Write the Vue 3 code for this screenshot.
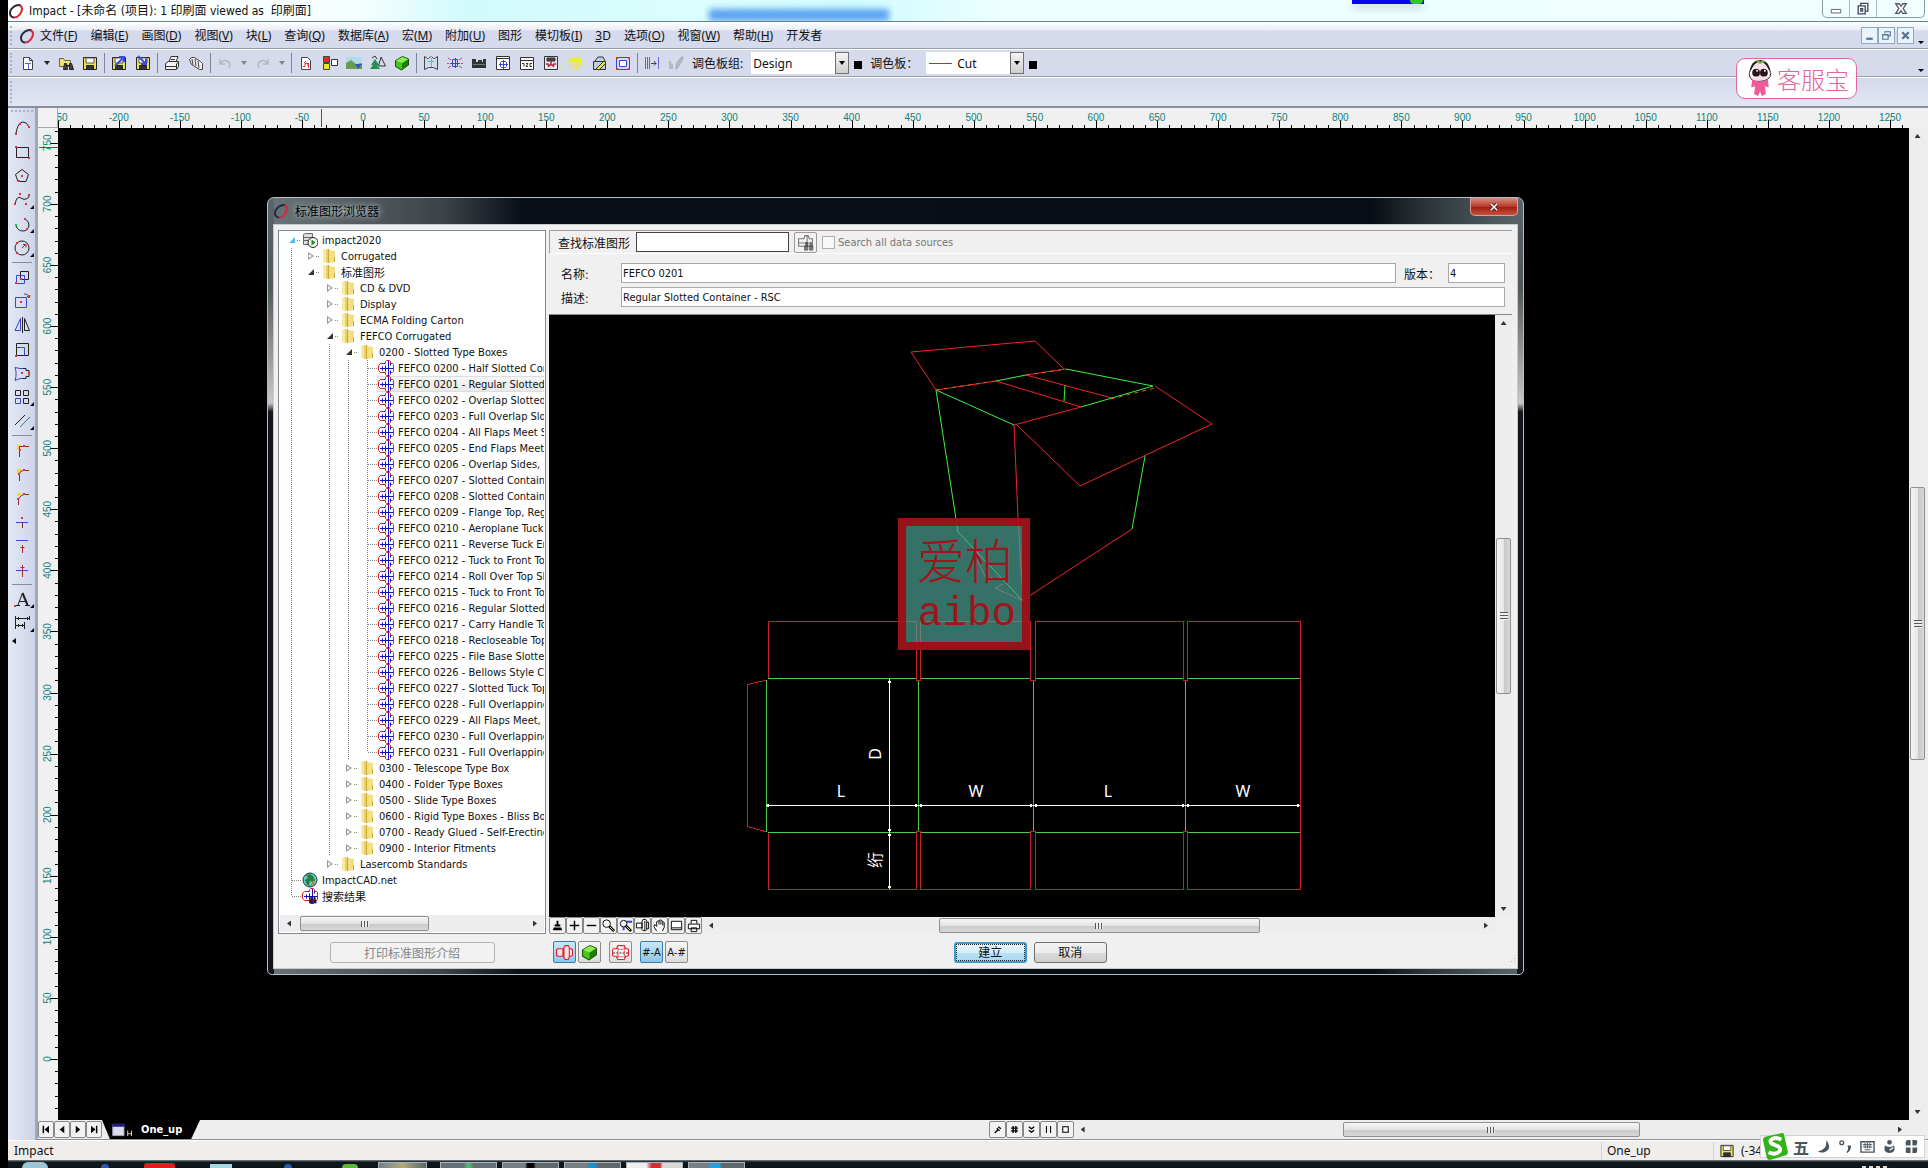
<template>
  <div class="app">
    <header class="titlebar">
      <svg class="ring" viewBox="0 0 16 16" v-html="icons.ring"></svg>
      <h1 class="title">Impact - [未命名 (项目): 1 印刷面 viewed as&nbsp; 印刷面]</h1>
      <div class="tabglow"></div>
      <div class="dropzone"><i></i></div>
      <div class="winctl">
        <button type="button" aria-label="最小化"><svg viewBox="0 0 16 16" v-html="icons.winMin"></svg></button>
        <button type="button" aria-label="还原"><svg viewBox="0 0 16 16" v-html="icons.winRestore"></svg></button>
        <button type="button" class="wide" aria-label="关闭"><svg viewBox="0 0 16 16" v-html="icons.winClose"></svg></button>
      </div>
    </header>

    <nav class="menubar">
      <span class="grip"></span>
      <svg class="ring" viewBox="0 0 16 16" v-html="icons.ring"></svg>
      <button v-for="m in menus" :key="m[0] + m[1]" type="button" class="menu">{{ m[0] }}<template v-if="m[1]">(<u>{{ m[1] }}</u>)</template></button>
      <button type="button" class="menu"><u>3</u>D</button>
      <button v-for="m in menusEnd" :key="m[0]" type="button" class="menu">{{ m[0] }}<template v-if="m[1]">(<u>{{ m[1] }}</u>)</template></button>
      <div class="mdictl">
        <button type="button" aria-label="最小化文档"><svg viewBox="0 0 12 12"><path d="M3 9h6" stroke="#54708f" stroke-width="2" /></svg></button>
        <button type="button" aria-label="还原文档"><svg viewBox="0 0 12 12"><path d="M4.500 4V2.500h5v4H8M2.500 5.500h5v4h-5zM2 5h6" fill="none" stroke="#54708f" /></svg></button>
        <button type="button" class="apart" aria-label="关闭文档"><svg viewBox="0 0 12 12"><path d="M3 3l6 6M9 3l-6 6" stroke="#54708f" stroke-width="2" /></svg></button>
      </div>
      <i class="more"></i>
    </nav>

    <div class="toolbar">
      <span class="grip"></span>
      <template v-for="(t, i) in tools" :key="i">
        <span v-if="t === '|'" class="sep"></span>
        <button v-else-if="t === 'v'" type="button" class="caret" aria-label="更多"></button>
        <button v-else-if="t === 'g'" type="button" class="caret off" aria-label="更多" disabled></button>
        <button v-else type="button" class="tool" :aria-label="t"><svg viewBox="0 0 16 16" v-html="icons[t]"></svg></button>
      </template>
      <label for="palette-group" class="barlabel">调色板组:</label>
      <div class="combo">
        <select id="palette-group" v-model="group"><option>Design</option></select>
        <span class="drop"></span>
      </div>
      <i class="block"></i>
      <label for="palette" class="barlabel">调色板：</label>
      <div class="combo">
        <i class="redline"></i>
        <select id="palette" v-model="palette"><option>Cut</option></select>
        <span class="drop"></span>
      </div>
      <i class="block"></i>
      <i class="more"></i>
    </div>
    <div class="toolbar empty"><span class="grip"></span></div>

    <div class="work">
      <aside class="side">
        <span class="hgrip"></span>
        <template v-for="(t, i) in sideTools" :key="i">
          <span v-if="t === '|'" class="hsep"></span>
          <button v-else type="button" class="sidetool" :class="{ fly: flyouts.includes(t) }" :aria-label="t">
            <svg viewBox="0 0 18 18" v-html="icons[t]"></svg>
          </button>
        </template>
        <i class="sidearrow"></i>
      </aside>

      <main class="doc">
        <div class="view">
          <div class="corner"></div>
          <svg class="hruler">
            <path :d="hTicks" stroke="#000" />
            <text v-for="v in hLabels" :key="v" :x="305 + v * scale" y="13" text-anchor="middle">{{ v }}</text>
            <path d="M263.500 1v18" stroke="#c8202c" />
          </svg>
          <div class="rcap"></div>
          <svg class="vruler">
            <path :d="vTicks" stroke="#000" />
            <text v-for="v in vLabels" :key="v" :transform="`translate(13 ${931 - v * scale}) rotate(-90)`" text-anchor="middle">{{ v }}</text>
            <path d="M1 19.500h19" stroke="#c8202c" />
          </svg>
          <div class="canvas"></div>
          <div class="scroll vert main-v">
            <i class="arr up"></i>
            <div class="track"><div class="thumb"></div></div>
            <i class="arr down"></i>
          </div>
        </div>
        <footer class="tabs">
          <button v-for="n in navs" :key="n" type="button" class="nav" :aria-label="n"><svg viewBox="0 0 16 16" v-html="icons[n]"></svg></button>
          <button type="button" class="sheet">
            <svg viewBox="0 0 24 16" v-html="icons.sheet"></svg>One_up
          </button>
          <div class="filler"></div>
          <button v-for="n in viewBtns" :key="n" type="button" class="nav vb" :aria-label="n"><svg viewBox="0 0 16 16" v-html="icons[n]"></svg></button>
          <div class="scroll main-h">
            <i class="arr back"></i>
            <div class="track"><div class="thumb"></div></div>
            <i class="arr fwd"></i>
          </div>
        </footer>
      </main>
    </div>

    <div class="status">
      <span class="msg">Impact</span>
      <span class="cell">One_up</span>
      <span class="cell pos"><svg viewBox="0 0 16 16" v-html="icons.save"></svg>(-34</span>
    </div>

    <div class="taskbar">
      <i class="orb"></i><i class="q blue"></i><i class="q red"></i><i class="q pane"></i><i class="q blue"></i><i class="q green"></i>
      <i v-for="c in tasks" :key="c" class="task" :class="c"></i>
      <i class="clock"></i>
    </div>

    <!-- floating service badge -->
    <button type="button" class="service">
      <svg viewBox="0 0 28 40" v-html="icons.mascot"></svg>客服宝
    </button>

    <div class="ime">
      <svg class="slogo" viewBox="0 0 28 28"><path d="M4 4l18-4q2 0 2 2l4 18q0 2-2 3l-17 5q-2 0-3-2L2 7q0-2 2-3z" fill="#35b11d" /><path d="M21 7q-5-3-9-1t-1 5l7 3q4 3 0 6t-10 0" fill="none" stroke="#fff" stroke-width="4" /></svg>
      <span>五</span>
      <svg v-for="n in imeIcons" :key="n" viewBox="0 0 16 16" v-html="icons[n]"></svg>
    </div>

    <section class="dialog" role="dialog" aria-labelledby="dlg-title">
      <div class="caption">
        <svg class="ring" viewBox="0 0 16 16" v-html="icons.ring"></svg>
        <h2 id="dlg-title">标准图形浏览器</h2>
        <button type="button" class="close" aria-label="关闭"><svg viewBox="0 0 16 10"><path d="M4 1l8 8M12 1L4 9" stroke="#4a1a14" stroke-width="4" /><path d="M4 1l8 8M12 1L4 9" stroke="#fff" stroke-width="2" /></svg></button>
      </div>
      <div class="body">
        <div class="browser">
          <div class="tree">
            <ul>
              <li v-for="row in rows" :key="row.text" :class="{ sel: row.text === selected }">
                <span v-for="(c, i) in row.cells" :key="i" class="ind" :class="c"></span>
                <button type="button" class="node" @click="selected = row.text">
                  <svg viewBox="0 0 16 16" v-html="icons[row.icon]"></svg>{{ row.text }}
                </button>
              </li>
            </ul>
            <div class="scroll tree-h">
              <i class="arr back"></i>
              <div class="track"><div class="thumb"></div></div>
              <i class="arr fwd"></i>
            </div>
          </div>
          <button type="button" class="btn print" disabled>打印标准图形介绍</button>
        </div>

        <div class="detail">
          <div class="search">
            <label for="find">查找标准图形</label>
            <input id="find" v-model="query" type="text" />
            <button type="button" class="findbtn" aria-label="查找"><svg viewBox="0 0 16 16" v-html="icons.findGray"></svg></button>
            <input id="all" type="checkbox" disabled />
            <label for="all" class="dim">Search all data sources</label>
          </div>
          <div class="fields">
            <div class="field">
              <label for="name">名称:</label>
              <input id="name" v-model="name" type="text" />
              <label for="ver" class="ver">版本：</label>
              <input id="ver" v-model="version" type="text" class="short" />
            </div>
            <div class="field">
              <label for="desc">描述:</label>
              <input id="desc" v-model="desc" type="text" />
            </div>
          </div>

          <div class="preview">
            <svg class="drawing" viewBox="549 315 946 602">
              <g fill="none" stroke="#f0242e">
                <path d="M936 390L911 352L1035 341L1064 369M936 390L996 381M1026 375L1066 369M1014 425L1081 407M996 381L1081 407M1026 375L1112 398M1155 386L1212 424L1080 486L1017 425M1014 425L1018 518L1023 600L1132 529" />
                <path d="M975 556L987 580L992 577M1003 584L995 588L1023 601" />
              </g>
              <g fill="none" stroke="#3cf03c">
                <path d="M996 381L1026 375M1066 369L1153 386L1081 407M936 390L1014 425M1065 385L1064 401M936 390L958 532L1023 601M1145 456L1132 529" />
              </g>
              <path d="M936 390L996 381M1026 375L1066 369M1111 399L1155 388" fill="none" stroke="#d0641c" stroke-dasharray="4 4" />
              <g fill="none" stroke="#c8202a" shape-rendering="crispEdges">
                <path d="M768.500 679V621.500H916.500V680.500H920.500V621.500H1030.500V680.500H1035.500V621.500H1183.500V680.500H1187.500V621.500H1300.500V889.500H1187.500V831.500H1183.500V889.500H1035.500V831.500H1030.500V889.500H920.500V831.500H916.500V889.500H768.500V832" />
                <path d="M767 680L747.500 684.500V826.500L767 832" />
              </g>
              <path d="M768 678.500H916M921 678.500H1030M1036 678.500H1183M1188 678.500H1300M768 832.500H916M921 832.500H1030M1036 832.500H1183M1188 832.500H1300M766.500 680V832M918.500 681V831M1033.500 681V831M1185.500 681V831" stroke="#4cc84c" shape-rendering="crispEdges" />
              <g stroke="#fff" fill="#fff" shape-rendering="crispEdges">
                <path d="M766 805.500H1300M889.500 679V889" />
                <path v-for="x in [768, 916, 921, 1031, 1036, 1183, 1188, 1298]" :key="x" :d="`M${x - 1} 804h2v3h-2z`" stroke="none" />
                <path v-for="y in [682, 830, 835, 887]" :key="y" :d="`M888 ${y - 1}h3v2h-3z`" stroke="none" />
              </g>
              <g class="dims" text-anchor="middle">
                <text x="841" y="797">L</text>
                <text x="976" y="797">W</text>
                <text x="1108" y="797">L</text>
                <text x="1243" y="797">W</text>
                <text transform="translate(881 754) rotate(-90)">D</text>
                <text transform="translate(881 860) rotate(-90)">绗</text>
              </g>
              <path d="M906 526h116v116H906z" fill="#4ea698" fill-opacity=".68" />
              <path d="M902 522h124v124H902z" fill="none" stroke="#a0141a" stroke-opacity=".95" stroke-width="8" />
              <g class="seal" text-anchor="middle">
                <text x="965" y="579" class="han">爱柏</text>
                <text x="967" y="625" class="lat">aibo</text>
              </g>
            </svg>
            <div class="scroll vert dlg-v">
              <i class="arr up"></i>
              <div class="track"><div class="thumb"></div></div>
              <i class="arr down"></i>
            </div>
          </div>
          <div class="zoombar">
            <button v-for="n in zooms" :key="n" type="button" class="nav zb" :aria-label="n"><svg viewBox="0 0 16 16" v-html="icons[n]"></svg></button>
            <div class="scroll dlg-h">
              <i class="arr back"></i>
              <div class="track"><div class="thumb"></div></div>
              <i class="arr fwd"></i>
            </div>
            <div class="nook"></div>
          </div>
          <div class="actions">
            <button type="button" class="mode on" aria-label="平面"><svg viewBox="0 0 16 16" v-html="icons.flat"></svg></button>
            <button type="button" class="mode" aria-label="立体"><svg viewBox="0 0 16 16" v-html="icons.cube"></svg></button>
            <button type="button" class="mode apart" aria-label="尺寸"><svg viewBox="0 0 16 16" v-html="icons.flatDim"></svg></button>
            <button type="button" class="mode apart on">#-A</button>
            <button type="button" class="mode">A-#</button>
            <div class="okrow">
              <button type="button" class="btn primary">建立</button>
              <button type="button" class="btn">取消</button>
            </div>
            <i class="resize"></i>
          </div>
        </div>
      </div>
    </section>
  </div>
</template>

<script setup>
import { ref } from 'vue'

const group = ref('Design')
const palette = ref('Cut')
const query = ref('')
const name = ref('FEFCO 0201')
const version = ref('4')
const desc = ref('Regular Slotted Container - RSC')
const selected = ref('FEFCO 0201 - Regular Slotted Container')

const menus = [['文件', 'F'], ['编辑', 'E'], ['画图', 'D'], ['视图', 'V'], ['块', 'L'], ['查询', 'Q'], ['数据库', 'A'], ['宏', 'M'], ['附加', 'U'], ['图形', ''], ['模切板', 'I']]
const menusEnd = [['选项', 'O'], ['视窗', 'W'], ['帮助', 'H'], ['开发者', '']]
const tools = ['page', 'v', 'open', 'save', '|', 'saveUp', 'saveDown', '|', 'print', 'printAll', '|', 'undo', 'g', 'redo', 'g', '|', 'sheetRed', 'swatch', 'image', 'tree', 'cube', '|', 'bracket', 'chip', 'block', 'panel', 'wave', 'die', 'yellow', 'edit', 'frame', '|', 'align', 'brush']
const sideTools = ['sArc', 'sRect', 'sPoly', 'sSpline', 'sCurve', 'sCircle', '|', 'sCopy', 'sRotate', 'sMirror', 'sScale', 'sStretch', 'sArray', 'sOffset', '|', 'sCorner', 'sFillet', 'sChamfer', 'sTrimA', 'sTrimB', 'sTrimC', '|', 'sText', 'sDim']
const flyouts = ['sSpline', 'sCurve', 'sCircle', 'sArray', 'sOffset', 'sText', 'sDim']
const navs = ['first', 'prev', 'next', 'last']
const viewBtns = ['pin', 'hash', 'down2', 'bars', 'box']
const zooms = ['brushBlk', 'plus', 'minus', 'lens', 'lensBox', 'shapeBlk', 'hand', 'window', 'printer2']
const imeIcons = ['moon', 'comma', 'keyb', 'person', 'clover']
const tasks = ['t1', 't2', 't3', 't4', 't5', 't6']

// rulers: 61px for every 50 units
const scale = 1.2216
const range = (a, b, step) => Array.from({ length: Math.floor((b - a) / step) + 1 }, (_, i) => a + i * step)
const hLabels = range(-250, 1250, 50)
const vLabels = range(0, 750, 50)
const hTicks = range(-250, 2500, 10).map(v => `M${Math.round(305 + v * scale) + 0.5} ${v % 50 ? 17 : 12}V20`).join('')
const vTicks = range(-500, 760, 10).map(v => `M${v % 50 ? 17 : 12} ${Math.round(931 - v * scale) + 0.5}H20`).join('')

const leaves = ['0200 - Half Slotted Container', '0201 - Regular Slotted Container', '0202 - Overlap Slotted Container', '0203 - Full Overlap Slotted Container', '0204 - All Flaps Meet Slotted', '0205 - End Flaps Meet Slotted', '0206 - Overlap Sides, Ends Meet', '0207 - Slotted Container', '0208 - Slotted Container Insert', '0209 - Flange Top, Regular Base', '0210 - Aeroplane Tuck, Regular', '0211 - Reverse Tuck Ends', '0212 - Tuck to Front Top', '0214 - Roll Over Top Slotted', '0215 - Tuck to Front Top Base', '0216 - Regular Slotted Tuck', '0217 - Carry Handle Top', '0218 - Recloseable Top', '0225 - File Base Slotted', '0226 - Bellows Style Container', '0227 - Slotted Tuck Top', '0228 - Full Overlapping Top', '0229 - All Flaps Meet, Overlap', '0230 - Full Overlapping Base', '0231 - Full Overlapping Ends']
const node = (cells, icon, text) => ({ cells, icon, text })
const rows = [
  node(['open root'], 'server', 'impact2020'),
  node(['guide', 'shut'], 'folder', 'Corrugated'),
  node(['guide', 'open'], 'folder', '标准图形'),
  node(['guide', '', 'shut'], 'folder', 'CD & DVD'),
  node(['guide', '', 'shut'], 'folder', 'Display'),
  node(['guide', '', 'shut'], 'folder', 'ECMA Folding Carton'),
  node(['guide', '', 'open'], 'folder', 'FEFCO Corrugated'),
  node(['guide', '', 'guide', 'open'], 'folder', '0200 - Slotted Type Boxes'),
  ...leaves.map((l, i) => node(['guide', '', 'guide', 'guide', i === leaves.length - 1 ? 'elbow' : 'tee'], 'carton', 'FEFCO ' + l)),
  ...['0300 - Telescope Type Box', '0400 - Folder Type Boxes', '0500 - Slide Type Boxes', '0600 - Rigid Type Boxes - Bliss Boxes', '0700 - Ready Glued - Self-Erecting', '0900 - Interior Fitments'].map(t => node(['guide', '', 'guide', 'shut'], 'folder', t)),
  node(['guide', '', 'shut'], 'folder', 'Lasercomb Standards'),
  node(['tee'], 'globe', 'ImpactCAD.net'),
  node(['elbow'], 'cartonFind', '搜索结果')
]

const p = (d, stroke = '#222', fill = 'none', w = 1) => `<path d="${d}" stroke="${stroke}" fill="${fill}" stroke-width="${w}"/>`
const dot = (...pts) => pts.map(([x, y]) => `<path d="M${x - 1} ${y - 1}h2v2h-2z" fill="#e8303c"/>`).join('')
const floppy = p('M1.500 2.500h13v12h-13z', '#222', '#e8e45a') + p('M4 3h8v5H4z', '#555', '#fff') + p('M4.500 10.500h7v4h-7z', '#222', '#333')
const carton = p('M2.500 3.500h5v-2l1-1h3l1 1v2h2l1 1v7l-1 1h-2v2l-1 1h-3l-1-1v-2h-5l-2-2v-5z', '#e01828', '#fff') + p('M2 8.500h13M10.500 1v15M4.500 6.500v4M6 3.500h1M12.500 3.500v2M12.500 10.500v3M7.500 5.500v6', '#1010c0')
const glass = p('M4 5h2v4H4zM9 5h2v4H9zM2.500 9h4v5h-4zM8.500 9h4v5h-4zM6 8h3', '#222', '#222')

const icons = {
  ring: p('M12.500 2.200C8 1 2.500 5 2 9.500c-.2 3 1.500 5 4 5', '#222b3c', 'none', 2) + p('M6 14.500c4.500 0 8-5 8-8.500 0-2-1-3.300-2.500-3.800', '#d8283c', 'none', 2),
  winMin: p('M2.500 8.500h11v4h-11z', '#556', '#fff'),
  winRestore: p('M5.500 4V1.500h8v9H11M2.500 4.500h8v9h-8zM5.500 7.500h2v3h-2z', '#445', 'none', 1.5),
  winClose: p('M2 2h4l2 3 2-3h4L10.500 7.500l3.500 5.500h-4l-2-3-2 3H2l3.500-5.500z', '#556', '#fff', 1.5),
  page: p('M3.500 2.500h6l3 3v9h-9z', '#444', '#fff') + p('M9.500 2.500v3h3', '#444') + p('M5 8.500h6M8.500 8v6', '#4a68d0'),
  open: p('M1.500 3.500h4l1 2h6v6h-11z', '#665', '#efe36a') + p('M6.500 8.500h2l1 6h-4zM11.500 8.500h2l2 6h-4zM8 10.500h4', '#222', '#444'),
  save: floppy,
  saveUp: floppy + p('M4 11L12 3M8 2h5v5', '#3a4ce0', 'none', 2),
  saveDown: floppy + p('M3 1l8 8M11 4v5H6', '#3a4ce0', 'none', 2),
  print: p('M5 7l2-5.500h7l-2 5.500M1.500 8.500l3-2h10v5l-2 3h-11z', '#333', '#f4f4f4') + p('M2 11.500h10M7 4.500h4M12.500 14V9l2-2', '#333'),
  printAll: p('M1.500 4.500l2-2h3l6 4 2 2v6h-3l-8-5zM4 4l1 6M7 4l1 7M10 6l1 7', '#444', '#eee'),
  undo: p('M3 4v5h5M3 9q3-5 7-3t2 7', '#b4b9c6', 'none', 1.5),
  redo: p('M13 4v5H8M13 9q-3-5-7-3t-2 7', '#b4b9c6', 'none', 1.5),
  sheetRed: p('M3.500 2.500h6l3 3v9h-9z', '#444', '#fff') + p('M5 11.500h2V8.500h3v3M6 8l2-2M10.500 8v5', '#d8303c'),
  swatch: p('M1.500 1.500h6v6h-6z', '#444', '#e02c24') + p('M1.500 8.500h6v6h-6z', '#444', '#f0e420') + p('M9.500 4.500h6v6h-6z', '#333', '#fff'),
  image: `<path d="M0 2h16v6H0z" fill="#aedcea"/><path d="M0 8l5-3 5 4 6-1v6H0z" fill="#6c9a52"/><path d="M9 9h7l-4 5z" fill="#2c5cb8"/>`,
  tree: `<path d="M5 4l4 6H7l3 4H0l3-4H1z" fill="#22914c"/>` + p('M2 3l3-2 2 3M11 2l4.500 9h-7z', '#333'),
  cube: p('M1.500 5.500l7-4 6 2.500v6l-7 5-6-3.500z', '#174a08', '#45c81c') + `<path d="M2 5.500l6.500-3.600L14 4.200 7.700 8z" fill="#8cf04c"/><path d="M8 8.500l6-4v5.300l-6 4.500z" fill="#1f7a0a"/>`,
  bracket: p('M1.500 14.500v-13l3 2h1l2-2M14.500 14.500v-13l-3 2h-1l-2-2M1.500 14.500l4-2h5l4 2', '#444') + p('M8.500 3v9M5 6.500h6', '#3cc4e4', 'none', 1),
  chip: p('M5.500 4.500h5v7h-5zM3 8.500h10M8.500 3v10', '#3a44d8') + p('M1 3l3 2M15 3l-3 2M1 13l3-2M15 13l-3-2M0 8.500h2M14 8.500h2', '#d83a78'),
  block: `<path d="M1 4h4v3h2V5h4v2h1V4h3v9H1z" fill="#333"/><path d="M2 9h12v1H2z" fill="#777"/>`,
  panel: p('M1.500 1.500h13v13h-13z', '#333', '#fff') + p('M2 3.500h12', '#333') + p('M4 9.500h9M8.500 5v9M6.500 6.500h4l1 1v4l-1 1h-4l-1-1v-4z', '#3a44d8'),
  wave: p('M1.500 2.500h13v12h-13z', '#333', '#fff') + p('M2 5.500h12M3 8.500h2v3M7 8.500h2l-2 3h2M13 8.500h-2v3h2', '#333'),
  die: p('M1.500 1.500h13v13h-13z', '#333', '#e8e4e8') + p('M4 3h8v3H4z', '#333', '#444') + p('M3 9h2l1 3M13 9h-2l-1 3M8 6v4M6 10h4', '#b02840', 'none', 1.5),
  yellow: p('M4 3.500h8M4 12.500h8M2.500 5.500h11v5h-11z', '#f0ec28', 'none', 1.5) + p('M6 8h4', '#f0ec28'),
  edit: p('M2.500 6.500h12v8h-12zM4 6l3-4h5l2 4', '#333', '#bcd0e0') + p('M5 14l8-8 2 2-7 7z', '#333', '#f0e428'),
  frame: p('M1.500 2.500h13v12h-13z', '#3a44d8') + p('M4.500 5.500h7v6h-7z', '#3a44d8', '#fff') + dot([2, 3], [14, 3], [2, 14], [14, 14]),
  align: p('M1.500 2v12M3.500 2v12M5.500 2v12', '#e03c4c') + p('M7 8.500h5M10 6l2 2.500-2 2', '#444') + p('M14.500 2v12', '#6a6ad8'),
  brush: p('M2 6v8M4 9v5M8 14l1-6 5-6 1 1-4 7z', '#aaaeb8', '#c4c8d0', 1.5),
  sArc: p('M3 14Q5 3 10 3q4 0 6 5') + dot([3, 15], [7, 5], [16, 8]),
  sRect: p('M3.500 4.500h12v10h-12z') + dot([3, 4], [16, 15]),
  sPoly: p('M9 2.500l6.500 5-2.500 7H5L2.500 7.500z') + dot([9, 9], [6, 14]),
  sSpline: p('M2 13Q4 4 8 7t8-1v-3', '#222') + dot([2, 13], [7, 3], [13, 13], [16, 4]),
  sCurve: p('M3 11q2 5 7 5t6-6q0-4-4-6') + dot([12, 4], [14, 14]) + `<path d="M2 9h2v2H2z" fill="#2cc43c"/>`,
  sCircle: `<circle cx="9" cy="9" r="7" fill="none" stroke="#222"/>` + p('M9 9l4-4M10 5.500h3v3', '#a02030') + dot([4, 14], [4, 4]),
  sCopy: p('M7.500 3.500h8v8h-8z') + p('M3.500 7.500h8v8h-8z', '#3a44d8') + dot([3, 15], [8, 11]),
  sRotate: p('M2.500 5.500h11v10h-11z', '#3a44d8') + p('M11 2q5 0 5 4M14 4l2 2 1-3', '#a02030') + dot([8, 10]),
  sMirror: p('M7.500 2.500v12H2z', '#3a44d8') + p('M9.500 1v16', '#222') + p('M11.500 2.500v12h5z'),
  sScale: p('M3.500 3.500h12v12h-12z') + p('M3.500 7.500h8v8', '#3a44d8') + dot([3, 16]),
  sStretch: p('M10 4.500H7l-5-1 1 4v5l-1 4 5-2h3', '#3a44d8') + p('M10 4.500h3v2h3v6h-3v2h-3') + dot([9, 9], [16, 9]),
  sArray: p('M2.500 2.500h5v5h-5zM10.500 2.500h5v5h-5zM10.500 10.500h5v5h-5z') + p('M2.500 10.500h5v5h-5z', '#3a44d8'),
  sOffset: p('M2 13L12 3') + p('M7 15L17 5', '#3a7a88'),
  sCorner: p('M4 5h4M5 4v5', '#e8dc28', 'none', 2) + p('M6.500 16V5.500H16', '#803028') + dot([7, 9], [11, 5]),
  sFillet: p('M4 5h4M5 4v5', '#e8dc28', 'none', 2) + p('M6.500 16V9q0-3.500 4-3.500H16', '#803028') + dot([6, 9], [11, 5]),
  sChamfer: p('M4 5h4M5 4v3', '#e8dc28', 'none', 2) + p('M5.500 16V10Q8 5.500 11 5.500h5', '#803028') + dot([5, 10], [11, 5]),
  sTrimA: p('M3 9.500h12', '#3a44d8') + p('M9.500 9v6', '#803028') + dot([9, 5]),
  sTrimB: p('M3 3.500h12', '#3a44d8') + p('M9.500 8v8M7.500 10.500h4', '#b03028'),
  sTrimC: p('M3 9.500h12', '#3a44d8') + p('M9.500 4v12M7.500 6.500h4', '#b03028'),
  sText: p('M5 15L9.500 3l5 12M6 11.500h7M3 15.500h4M12 15.500h5', '#222') + p('M9.500 3l5 12', '#222', 'none', 2) + dot([2, 16]),
  sDim: p('M2.500 2v13M11.500 8v7M16.500 2v4M3 4.500h13M3 11.500h8M5.500 3v3M14.500 3v3M5.500 10v3M9.500 10v3', '#222'),
  first: p('M4.500 3v10', '#000', 'none', 2) + '<path d="M12 3v10L6 8z"/>',
  prev: '<path d="M11 3v10L5 8z"/>',
  next: '<path d="M5 3v10l6-5z"/>',
  last: p('M11.500 3v10', '#000', 'none', 2) + '<path d="M4 3v10l6-5z"/>',
  sheet: p('M.5 2.500h12v12H.5z', '#a8a8c8', '#dcdcec') + '<path d="M0 2h13v3H0z" fill="#1c1c84"/>' + p('M16.500 9v6M20.500 9v6M17 12.500h4', '#e8e4a0'),
  pin: p('M4 13l5-5M7 6l4 4M9 4l4 3', '#000', 'none', 2),
  hash: p('M6 3v10M10 3v10M3 6h10M3 10h10', '#000', 'none', 2),
  down2: p('M4 4l4 3 4-3M4 9l4 3 4-3', '#000', 'none', 2),
  bars: p('M5 3v10M11 3v10', '#000', 'none', 1.5),
  box: p('M4 4h8v8H4z', '#000', '#fff', 1.5),
  brushBlk: '<path d="M7 3h2v4h2v2H5V7h2zM4 10h8l1 3H3z"/>',
  plus: p('M8 3v10M3 8h10', '#000', 'none', 1.5),
  minus: p('M3 8h10', '#000', 'none', 1.5),
  lens: '<circle cx="6" cy="6" r="4" fill="#fff" stroke="#000"/>' + p('M9 9l5 5', '#000', 'none', 3) + p('M9.500 9.500l4 4', '#e8d860'),
  lensBox: p('M8 4h7M6 4v9', '#3a44d8', 'none', 2) + '<circle cx="6" cy="6" r="3.500" fill="#fff" stroke="#000"/>' + p('M8 8l6 6', '#000', 'none', 3) + p('M9 9l4 4', '#e8d860'),
  shapeBlk: p('M1.500 5.500h6v5h-6zM7.500 3.500l1-2h3l1 2v9l-1 1h-3l-1-1zM12.500 4.500h2v7h-2M10.500 3v10', '#000', '#fff'),
  hand: p('M5 14L2 9l1-2 2 2V4l2-1 2-1 2 1 2 2v5l-2 4M7.500 3v4M9.500 3v4M11.500 4v4', '#000', '#fff'),
  window: p('M2.500 3.500h11v9h-11zM3 10.500h10', '#000', '#fff', 1),
  printer2: p('M5.500 6V2.500h6V6M2.500 6.500h12v5h-12zM5.500 10.500h6v4h-6z', '#000', '#fff', 1),
  flat: p('M1.500 4.500h5v7h-5l-1-1v-5zM7.500 3.500l1-2h3l1 2v9l-1 2h-3l-1-2zM12.500 4.500h2l1 1v5l-1 1h-2', '#e02030', '#fbdfe2'),
  flatDim: p('M.5 5.500l1-1h3v-1l1-2h6l1 2v1h2l1 1v5l-1 1h-2v1l-1 2h-6l-1-2v-1h-3l-1-1z', '#e02030', '#fff') + '<path d="M1 8.500h14" stroke="#222" stroke-dasharray="2 1"/>' + '<path d="M5.500 3v10M11.500 3v10M5 5h7M5 12h7" stroke="#e02030" stroke-dasharray="2 1"/>',
  server: p('M1.500 2.500l2-1h7v11h-9zM2 5.500h8M2 8.500h8', '#666', '#ddd') + '<circle cx="11" cy="10.500" r="5" fill="#eef8ea" stroke="#222"/><path d="M9.500 7.500v6l4-3z" fill="#1a8a28"/>',
  folder: '<path d="M2 2l5-1 1 1v13l-6-1z" fill="#e9cf6b"/><path d="M2 2l3-1v13.500L2 14z" fill="#f7ea9d"/><path d="M8 2l6 1v11l-6 1z" fill="#f3df82"/><path d="M7 1h1v14H7z" fill="#c9a93c"/><path d="M13 9h1v5h-1z" fill="#c9a93c"/>',
  carton,
  cartonFind: carton + `<g transform="translate(6 6) scale(.65)">${glass}</g>`,
  globe: '<circle cx="8" cy="8" r="7" fill="#5cd0d4" stroke="#1c3844"/><path d="M4 3l4-1 3 2 2 4-2 2-3-1-1 3 2 2-4-1-2-5 3-2z" fill="#2e7c3a"/><path d="M10 10l3-1-1 4-3 1z" fill="#a88a3a"/>',
  findGray: p('M1.500 4.500h5l1-3h3l1 3h3v7H1.500zM9.500 2v9M2 8.500h10', '#777', '#f4f4f4') + `<g transform="translate(5 4) scale(.8)" opacity=".6">${glass}</g>`,
  mascot: '<path d="M6 7q8-9 16 0l3 8q0 7-11 8T3 15z" fill="#fbdfe8" stroke="#333"/><path d="M4 13q2-11 10-11t10 11" fill="none" stroke="#222" stroke-width="2"/><path d="M10 3l3-2 1 2 3-2 2 2-5 2z" fill="#7cb84a"/><circle cx="9" cy="14" r="5" fill="#fff"/><circle cx="19" cy="14" r="5" fill="#fff"/><circle cx="10" cy="14" r="4" fill="#2a1418"/><circle cx="18" cy="14" r="4" fill="#2a1418"/><circle cx="11" cy="12" r="1" fill="#fff"/><circle cx="19" cy="12" r="1" fill="#fff"/><path d="M6 21q8 4 16 0l1 8-4-1 1 8-4 2-2-5-2 5-4-2 1-8-4 1z" fill="#ee5a9a"/>',
  moon: '<path d="M11 1q7 9-2 13-4 1-7-1 10-1 9-12z" fill="#4a5560"/>',
  comma: '<circle cx="4" cy="4" r="2" fill="none" stroke="#4a5560" stroke-width="1.500"/><path d="M10 7h4q0 5-4 8l-1-1q3-3 1-7z" fill="#4a5560"/>',
  keyb: p('M1 3h14v11H1z', '#4a5560', 'none', 1.5) + p('M3 6h10M3 8.500h10M5 11.500h6', '#4a5560', 'none', 1) + p('M5.500 4v6M8 4v6M10.500 4v6', '#4a5560'),
  person: '<circle cx="8" cy="3.500" r="2.500" fill="#4a5560"/><path d="M3 7q5 3 10 0 2 8-5 8T3 7z" fill="#4a5560"/><path d="M8 12l4-3" stroke="#fff" stroke-width="1.500"/>',
  clover: '<path d="M2 3q0-2 2-2h3v6H3Q1 7 2 3zM9 1h3q3 0 2 3 0 3-2 3H9zM2 9h5v6H4q-3 0-2-3zM9 9h5v4q0 2-2 2H9z" fill="#4a5560"/>'
}
</script>

<style>
html, body, #app { margin: 0; min-height: 100%; }
body { background: #000; overflow: hidden; }
</style>

<style scoped>
.app {
  position: relative;
  display: flex;
  flex-direction: column;
  height: 100vh;
  padding-left: 8px;
  background: #000;
  color: #111;
  font-family: "Noto Sans", "Noto Sans CJK SC", sans-serif;
  font-size: 12px;
}
button, input, select { font: inherit; color: inherit; margin: 0; padding: 0; box-sizing: border-box; }
button { background: none; border: 0; }
h1, h2, ul { margin: 0; padding: 0; font-weight: 400; list-style: none; }
i { display: block; }
svg { display: block; flex: none; }
.ring { width: 16px; height: 16px; }

/* title bar */
.titlebar {
  display: flex;
  align-items: center;
  gap: 5px;
  height: 21px;
  flex: none;
  border-bottom: 1px solid #69828c;
  background: linear-gradient(90deg, #fff, #f6ffff 18%, #d2fafc 24%, #dcfdfd 36%, #d0fbff 44%, #edffff 52%, #f0ffff);
  position: relative;
}
.title { font-family: "DejaVu Sans Condensed", "Noto Sans CJK SC", sans-serif; font-size: 12px; line-height: 20px; white-space: pre; }
.tabglow { position: absolute; left: 36.500%; top: 9px; width: 180px; height: 12px; background: #5ba2f2; filter: blur(3px); clip-path: inset(-6px -6px 0 -6px); }
.dropzone { position: absolute; left: 70%; top: 0; width: 72px; height: 4px; background: #0404ee; box-shadow: 0 4px 8px #b4c4c8; }
.dropzone i { margin-left: 58px; width: 13px; height: 4px; background: #35c82c; border-radius: 0 0 6px 6px; }
.winctl { display: flex; margin-left: auto; margin-right: 3px; align-self: flex-start; border: 1px solid #889ca4; border-top: 0; border-radius: 0 0 5px 5px; }
.winctl button { display: flex; align-items: center; justify-content: center; width: 27px; height: 17px; border-right: 1px solid #a8bcc4; }
.winctl .wide { width: 47px; border: 0; }
.winctl svg { width: 14px; height: 14px; }

/* bars */
.menubar, .toolbar {
  display: flex;
  align-items: center;
  flex: none;
  height: 27px;
  box-sizing: border-box;
  padding: 0 4px 0 2px;
  background: #d5daec;
  border-bottom: 1px solid #98a0ac;
}
.menubar { background: linear-gradient(#fff, #e9ecf6 8px, #d5daec 9px); gap: 13px; padding-top: 1px; }
.menubar .ring { margin: 0 -8px; }
.menu { white-space: nowrap; line-height: 20px; }
.grip { width: 4px; align-self: stretch; margin: 3px 0; border-left: 2px dotted #a9b1c8; box-sizing: border-box; }
.mdictl { display: flex; margin-left: auto; margin-right: -9px; }
.mdictl button { width: 17px; height: 17px; border: 1px solid #90a8c0; background: #eaf2fc; }
.mdictl .apart { margin-left: 2px; }
.mdictl svg { width: 13px; height: 13px; margin: 1px; }
.more { border: 3px solid transparent; border-top-color: #000; border-bottom: 0; margin-top: 14px; }
.toolbar { gap: 8px; height: 28px; border-top: 1px solid #fff; }
.toolbar .grip { margin-right: -2px; }
.toolbar .more { margin-left: auto; }
.empty { height: 31px; background: linear-gradient(#d3d9eb, #e2e6f4); border-bottom: 2px solid #8a909a; }
.tool, .tool svg { width: 16px; height: 16px; flex: none; }
.sep { width: 1px; height: 20px; margin: 0 -2px; background: #7f8594; flex: none; }
.caret { width: 6px; height: 4px; background: #222; clip-path: polygon(0 0, 100% 0, 50% 100%); flex: none; }
.caret.off { background: #808694; }
.barlabel { white-space: nowrap; }
.combo { position: relative; display: flex; width: 98px; height: 22px; background: #fff; align-items: center; }
.combo select { flex: 1; height: 22px; border: 0; background: none; appearance: none; padding: 0 2px; outline: 0; }
.redline { width: 23px; height: 1px; margin: 0 3px; background: #d02828; }
.drop { position: absolute; right: 0; top: 0; bottom: 0; width: 12px; border: 1px solid #707070; background: linear-gradient(#f4f4f4, #cfcfcf); pointer-events: none; }
.drop::after { content: ""; position: absolute; left: 3px; top: 8px; border: 3px solid transparent; border-top: 4px solid #000; border-bottom: 0; }
.block { width: 8px; height: 8px; background: #000; margin: 4px 0 0 -3px; }

/* work area */
.work { display: flex; flex: 1; min-height: 0; background: #eee; }
.side {
  display: flex;
  flex-direction: column;
  align-items: center;
  gap: 6px;
  width: 27px;
  box-sizing: border-box;
  background: linear-gradient(90deg, #e4e8f4, #cdd5ea);
}
.hgrip { width: 22px; height: 3px; margin-top: 2px; border-top: 2px dotted #a9b1c8; box-sizing: border-box; }
.sidetool { position: relative; width: 18px; height: 18px; flex: none; }
.sidetool svg { width: 18px; height: 18px; }
.fly::after { content: ""; position: absolute; right: -3px; bottom: 0; border: 2px solid #000; border-top-color: transparent; border-left-color: transparent; }
.hsep { width: 20px; height: 1px; margin: -1px 0; background: #868c9c; flex: none; }
.sidearrow { align-self: flex-start; margin-left: 4px; border: 3px solid transparent; border-right: 4px solid #000; border-left: 0; }
.doc { display: flex; flex-direction: column; flex: 1; min-width: 0; border-left: 3px solid #a0a6b2; border-bottom: 1px solid #8e8e8e; }
.view { display: grid; grid-template: 20px minmax(0, 1fr) / 20px minmax(0, 1fr) 19px; flex: 1; min-height: 0; }
.corner { background: #f2f2f2; border-bottom: 1px solid #aaa; border-right: 1px solid #aaa; }
.hruler, .vruler { width: 100%; height: 100%; background: #f0f0f0; overflow: hidden; }
.hruler text, .vruler text { font: 10px "Liberation Sans", sans-serif; fill: #12807c; }
.rcap { background: #f0f0f0; }
.canvas { background: #000; }

/* scrollbars */
.scroll { display: flex; align-items: center; height: 17px; background: #ededed; min-width: 0; }
.scroll.vert { flex-direction: column; width: 17px; height: auto; }
.track { display: flex; flex: 1; align-self: stretch; padding: 1px 0; min-width: 0; min-height: 0; }
.vert .track { flex-direction: column; padding: 0 1px; }
.track::before, .track::after { content: ""; flex: var(--before) 0 0; }
.track::after { flex-grow: var(--after); }
.thumb {
  display: flex;
  align-items: center;
  justify-content: center;
  flex: var(--size) 0 0;
  border: 1px solid #909090;
  border-radius: 2px;
  background: linear-gradient(#f6f6f6, #e4e4e4 50%, #cacaca 52%, #d8d8d8);
  box-sizing: border-box;
}
.vert .thumb { background: linear-gradient(90deg, #f6f6f6, #e6e6e6 50%, #c8c8cc 52%, #d8d8d8); }
.thumb::after { content: ""; width: 8px; height: 6px; background: repeating-linear-gradient(90deg, #555 0 1px, #eee 1px 3px); }
.vert .thumb::after { background: repeating-linear-gradient(#555 0 1px, #eee 1px 3px); height: 8px; }
.arr { margin: 0 7px; width: 4px; height: 6px; background: #333; flex: none; }
.vert .arr { margin: 6px 0; width: 6px; height: 4px; }
.back { clip-path: polygon(100% 0, 100% 100%, 0 50%); }
.fwd { clip-path: polygon(0 0, 0 100%, 100% 50%); }
.up { clip-path: polygon(0 100%, 100% 100%, 50% 0); }
.down { clip-path: polygon(0 0, 100% 0, 50% 100%); }
.main-v { --before: 358; --size: 283; --after: 359; }
.main-h { --before: 315; --size: 370; --after: 315; flex: 0 0 44.200%; margin-right: 19px; }
.dlg-v { --before: 365; --size: 270; --after: 365; }
.dlg-h { --before: 290; --size: 422; --after: 288; flex: 1; }
.tree-h { --before: 1; --size: 56; --after: 43; }

/* sheet tabs */
.tabs { display: flex; align-items: center; height: 19px; flex: none; background: #eee; }
.nav { width: 16px; height: 17px; border: 1px solid #888; border-radius: 2px; background: #f2f2f2; flex: none; }
.nav svg { width: 12px; height: 13px; margin: 1px; }
.vb, .zb { width: 17px; }
.vb svg { width: 11px; margin: 1px 2px; }
.sheet {
  display: flex;
  align-items: center;
  gap: 6px;
  width: 98px;
  height: 19px;
  padding-left: 10px;
  background: #000;
  color: #fff;
  font: bold 11px "DejaVu Sans Condensed", "Noto Sans", sans-serif;
  clip-path: polygon(0 0, 100% 0, 91% 100%, 8% 100%);
}
.sheet svg { width: 23px; height: 15px; }
.filler { flex: 1; }

.status { display: flex; align-items: center; height: 20px; flex: none; background: #f0eded; box-sizing: border-box; border-top: 1px solid #fff; }
.msg { flex: 1; padding-left: 6px; }
.cell { width: 112px; padding-left: 5px; line-height: 18px; box-sizing: border-box; border-left: 1px solid #d4d0d0; }
.pos { display: flex; align-items: center; gap: 6px; width: 215px; }
.pos svg { width: 16px; height: 15px; }

.taskbar { display: flex; align-items: flex-end; height: 8px; flex: none; overflow: hidden; background: linear-gradient(#7c8a90, #10181e 2px, #0c141a); padding-left: 14px; }
.orb { width: 26px; height: 6px; border-radius: 14px 14px 0 0; background: #9fc4d4; margin-right: 53px; }
.q { width: 8px; height: 4px; margin-right: 35px; flex: none; }
.q.blue { background: #2c5ca8; border-radius: 4px 4px 0 0; }
.q.red { width: 31px; height: 5px; background: #e01c20; border-radius: 3px 3px 0 0; margin-right: 35px; }
.q.pane { width: 22px; height: 4px; background: #a8d4e4; margin-right: 52px; }
.q.green { width: 16px; height: 4px; background: #5cb838; border-radius: 8px 8px 0 0; margin: 0 20px 0 15px; }
.task { width: 57px; height: 6px; margin-right: 5px; box-sizing: border-box; border: 1px solid #aab2b8; border-bottom: 0; background: linear-gradient(90deg, #8b9398, #4c565c); flex: none; }
.t1 { width: 49px; margin-right: 13px; background: linear-gradient(90deg, #74808a, #b0ac7c, #5a646a); }
.t2 { background: linear-gradient(90deg, #656f75 40%, #5cb878 50%, #656f75 60%); }
.t3 { background: linear-gradient(90deg, #787f84 40%, #000 45% 55%, #60686c 60%); }
.t4 { background: linear-gradient(90deg, #787f84 40%, #1c8cd0 45% 55%, #60686c 60%); }
.t5 { background: linear-gradient(90deg, #eee 35%, #d02c34 45% 60%, #d8d8d8 65%); }
.t6 { background: linear-gradient(90deg, #787f84 35%, #28a0e0 40% 55%, #60686c 60%); }
.clock { width: 28px; height: 2px; margin: 0 38px 0 auto; background: repeating-linear-gradient(90deg, #ddd 0 4px, #111a20 4px 7px); }

/* badge and input bar lie over the window */
.service {
  position: absolute;
  right: 71px;
  top: 58px;
  display: flex;
  align-items: center;
  gap: 3px;
  width: 121px;
  height: 41px;
  padding-left: 9px;
  border: 1px solid #dc6a9c;
  border-radius: 9px;
  background: #fff;
  color: #e0639a;
  font: 300 24px "Noto Sans CJK SC", sans-serif;
  white-space: nowrap;
}
.service svg { width: 28px; height: 39px; }
.ime { position: absolute; right: 3px; bottom: 10px; display: flex; align-items: center; gap: 7px; height: 23px; padding: 0 5px; background: #fff; border: 1px solid #d0d4d8; box-sizing: border-box; color: #4a5560; font: bold 16px "Noto Sans CJK SC", sans-serif; }
.ime svg { width: 15px; height: 15px; }
.ime .slogo { width: 27px; height: 27px; margin: 0 -2px 0 -5px; }

/* dialog */
.dialog {
  position: absolute;
  left: 267px;
  top: 197px;
  width: 65.200%;
  box-sizing: border-box;
  padding: 0 5px 5px;
  border: 1px solid #b4c0c8;
  border-radius: 7px 7px 5px 5px;
  background:
    linear-gradient(#5b656a, #50585c 90px, #c8c8c8 205px, #10161c 214px) left / 6px 100% no-repeat,
    linear-gradient(#5b656a, #50585c 90px, #c8c8c8 205px, #10161c 214px) right / 6px 100% no-repeat,
    linear-gradient(90deg, #6b7478, #3c4348 14%, #0a1018 20%, #090d15 88%, #2a3236 92%, #5c676b);
  font-family: "DejaVu Sans Condensed", "Noto Sans CJK SC", sans-serif;
  font-size: 11px;
}
.caption { display: flex; align-items: center; gap: 6px; height: 26px; }
.caption h2 { font: 12px "Noto Sans CJK SC", sans-serif; line-height: 14px; padding: 0 8px 0 0; background: radial-gradient(closest-side, #8a9194, transparent); color: #000; text-shadow: 0 0 5px #aab2b5, 0 0 8px #aab2b5; }
.close { display: flex; align-items: center; justify-content: center; width: 48px; height: 18px; margin: 0 0 0 auto; align-self: flex-start; border: 1px solid #d8a09a; border-top: 0; border-radius: 0 0 5px 5px; background: linear-gradient(#d98e80, #b8392a 50%, #a01c10 52%, #c8503c); }
.close svg { width: 14px; height: 8px; }
.body { display: flex; gap: 3px; padding: 5px 5px 5px 4px; border: 1px solid #c0ccd0; background: #f0f0f0; }
.browser { display: flex; flex-direction: column; align-items: center; width: 268px; flex: none; }
.tree { display: flex; flex-direction: column; width: 100%; height: 704px; box-sizing: border-box; padding: 1px; border: 1px solid #828790; background: #fff; }
.tree ul { flex: 1; overflow: hidden; padding-left: 2px; }
.tree li { display: flex; height: 16px; }
.ind { position: relative; width: 19px; height: 16px; flex: none; }
.guide, .tee { background: repeating-linear-gradient(#888 0 1px, transparent 1px 2px) 9px 0 / 1px 100% no-repeat; }
.elbow { background: repeating-linear-gradient(#888 0 1px, transparent 1px 2px) 9px 0 / 1px 8px no-repeat; }
.tee::after, .elbow::after { content: ""; position: absolute; left: 10px; top: 8px; width: 9px; height: 1px; background: repeating-linear-gradient(90deg, #888 0 1px, transparent 1px 2px); }
.open::before { content: ""; position: absolute; left: 7px; top: 5px; width: 6px; height: 6px; background: #333; clip-path: polygon(100% 0, 100% 100%, 0 100%); }
.root::before { background: #4cc0ec; }
.shut::before { content: ""; position: absolute; left: 7px; top: 4px; width: 6px; height: 8px; background: #999; clip-path: polygon(0 0, 100% 50%, 0 100%, 0 0, 1px 2px, 1px 6px, 4px 4px, 1px 2px); }
.open::after, .shut::after { content: ""; position: absolute; right: 0; top: 8px; width: 4px; height: 1px; background: repeating-linear-gradient(90deg, #888 0 1px, transparent 1px 2px); }
.node { display: flex; align-items: center; gap: 4px; flex: 1 0 auto; height: 16px; padding: 0 0 0 1px; white-space: nowrap; }
.node svg { width: 16px; height: 16px; }
.sel .node { background: linear-gradient(#f8f8f8, #e8e8e8); box-shadow: inset 0 0 0 1px #dedede; }
.btn { width: 73px; height: 21px; border: 1px solid #707070; border-radius: 3px; background: linear-gradient(#f3f3f3, #ebebeb 50%, #dadada 52%, #cfcfcf); font: 12px "Noto Sans CJK SC", sans-serif; line-height: 18px; }
.print { width: 165px; margin-top: 8px; background: #f2f2f2; border-color: #b0b2b6; color: #83868a; }
.primary { border: 2px solid #3c9ccc; background: linear-gradient(#ebf6fc, #d6eef9 50%, #b8e2f6 52%, #a8daf0); outline: 1px dotted #123; outline-offset: -3px; line-height: 16px; }

.detail { display: flex; flex-direction: column; flex: 1; min-width: 0; }
.search { display: flex; align-items: center; height: 24px; padding-left: 8px; border: 1px solid #a0a0a0; border-width: 1px 0 0 1px; border-bottom: 1px solid #fff; box-sizing: border-box; }
.search label { font-size: 12px; width: 78px; white-space: nowrap; }
.search .dim { color: #777; width: auto; font-size: 11px; }
.search input[type="text"] { width: 153px; height: 20px; border: 1px solid #444; background: #fff; padding: 0 4px; }
.findbtn { display: flex; align-items: center; justify-content: center; width: 23px; height: 21px; margin: 0 5px; border: 1px solid #999; border-radius: 2px; background: #f2f2f2; }
.findbtn svg { width: 17px; height: 17px; }
.search input[type="checkbox"] { appearance: none; width: 13px; height: 13px; margin-right: 3px; border: 1px solid #b0b0b0; background: #f8f8f8; }
.fields { display: flex; flex-direction: column; gap: 4px; padding: 9px 7px 7px 12px; }
.field { display: flex; align-items: center; height: 20px; }
.field label { width: 60px; font-size: 12px; flex: none; }
.field .ver { width: 44px; margin-left: 8px; }
.field input { flex: 1; min-width: 0; height: 20px; border: 1px solid #a6a8ac; background: #fff; padding: 0 1px; }
.field .short { flex: 0 0 57px; }
.preview { display: flex; background: #000; border-top: 1px solid #888; }
.drawing { flex: 1; min-width: 0; height: 602px; }
.dims text { font: 16px "Noto Sans", "Noto Sans CJK SC", sans-serif; fill: #fff; }
.seal { fill: #a0141a; }
.han { font: 300 48px "Noto Sans CJK SC", sans-serif; }
.lat { font: 41px "Liberation Mono", monospace; }
.zoombar { display: flex; height: 17px; }
.nook { width: 17px; }
.zb svg { width: 15px; height: 15px; margin: 0; }
.actions { display: flex; align-items: center; gap: 2px; padding: 7px 0 0 4px; }
.mode { display: flex; align-items: center; justify-content: center; width: 23px; height: 22px; border: 1px solid #8c8c8c; border-radius: 2px; background: linear-gradient(#f6f6f6, #dcdcdc); font-size: 11px; white-space: nowrap; }
.mode svg { width: 17px; height: 17px; }
.mode.on { background: linear-gradient(#c8e6f6, #8cc8ea); border-color: #3c7ca4; }
.mode.apart { margin-left: 6px; }
.okrow { display: flex; gap: 7px; margin-left: 27.500%; }
.resize { margin-left: auto; align-self: flex-end; width: 9px; height: 9px; margin-right: -4px; background: radial-gradient(circle, #b8b8b8 1px, transparent 1px) 0 0 / 3px 3px; clip-path: polygon(100% 0, 100% 100%, 0 100%); }
</style>
